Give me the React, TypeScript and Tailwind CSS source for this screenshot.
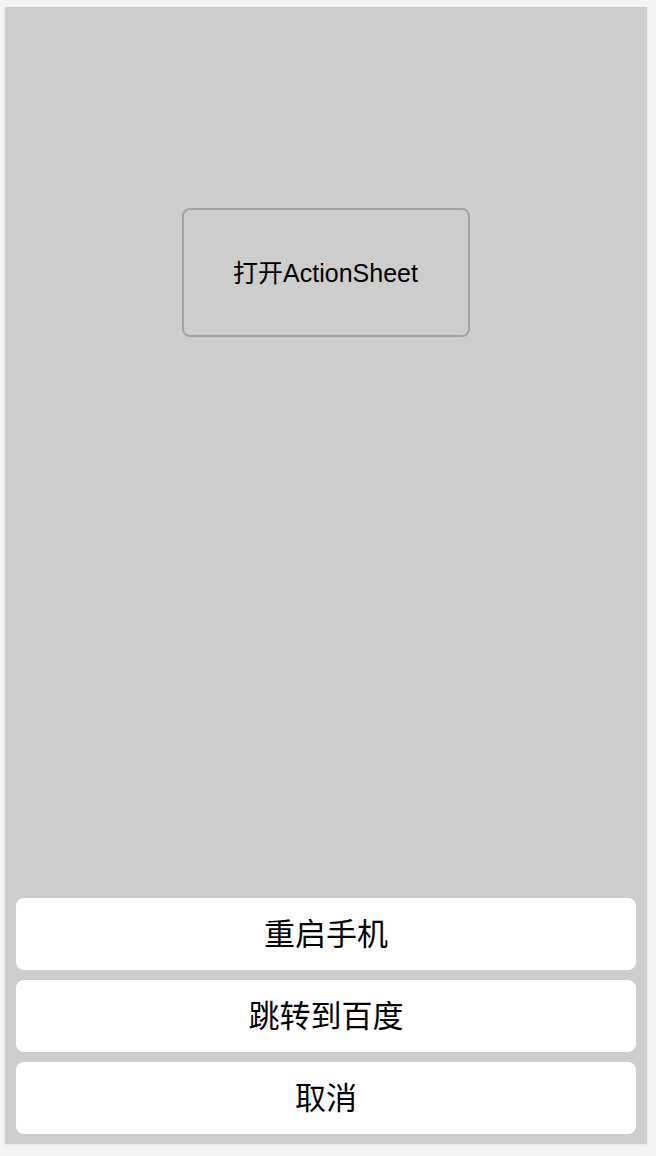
const ACTIONS = ['重启手机', '跳转到百度', '取消'];

export default function App() {
  return (
    <div
      className="min-h-[1156px] w-[656px] bg-[#f4f4f4] pt-[7px] pl-[5px]"
      style={{ fontFamily: '"Liberation Sans", "Noto Sans CJK SC", sans-serif' }}
    >
      <div className="flex h-[1137px] w-[642px] flex-col bg-[#cdcdcd] shadow-[0_1px_3px_rgba(0,0,0,0.08)]">
        {/* 打开按钮 */}
        <div className="flex justify-center pt-[201px] pr-[1px]">
          <button className="flex h-[129px] w-[288px] items-center justify-center rounded-[8px] border-2 border-[#a3a3a3] pt-[2px] text-[25px] text-black">
            打开ActionSheet
          </button>
        </div>

        {/* ActionSheet */}
        <div className="mt-auto flex flex-col gap-[10px] px-[11px] pb-[10px]">
          {ACTIONS.map(label => (
            <button
              key={label}
              className="flex h-[72px] w-full items-center justify-center rounded-[8px] bg-white pt-[2px] text-[31px] text-black"
            >
              {label}
            </button>
          ))}
        </div>
      </div>
    </div>
  );
}
